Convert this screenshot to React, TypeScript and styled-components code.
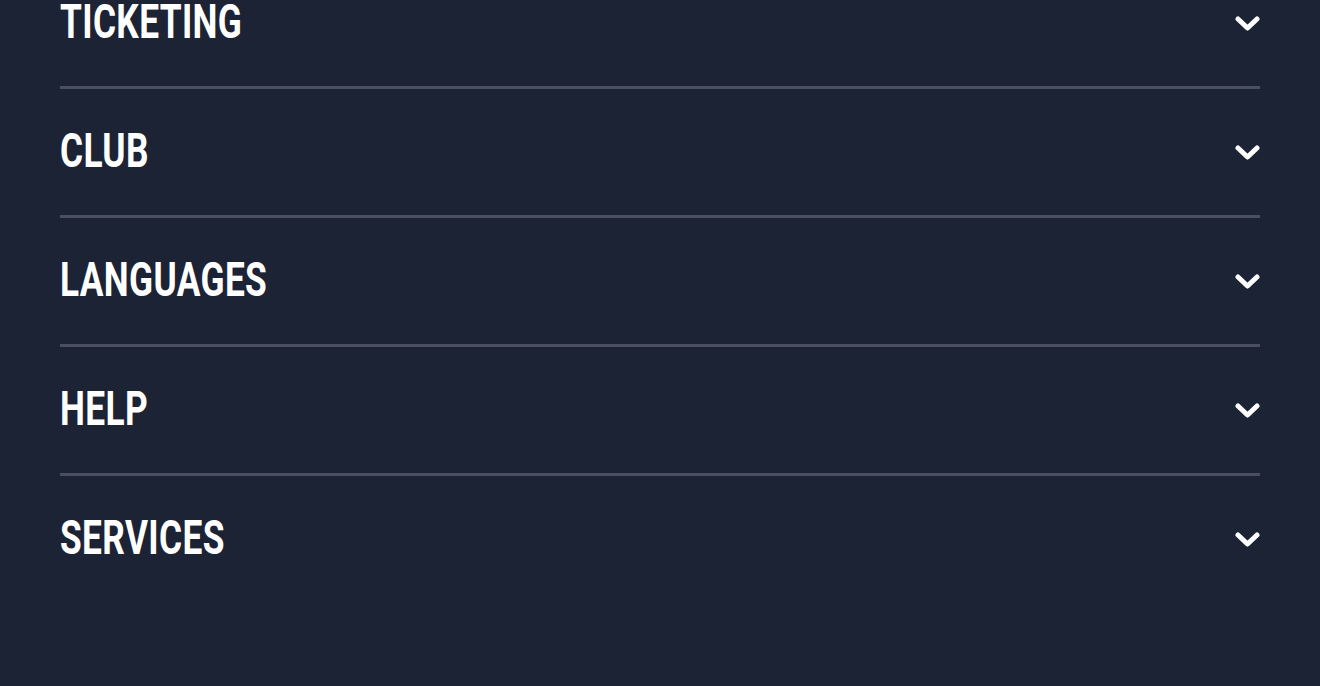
import React from "react";
import styled, { createGlobalStyle } from "styled-components";

const Global = createGlobalStyle`
  html, body { margin: 0; padding: 0; background: #1c2335; }
  body { overflow: hidden; }
`;

const Page = styled.div`
  width: 1320px;
  height: 686px;
  background: #1c2335;
  overflow: hidden;
  padding: 0 60px;
  box-sizing: border-box;
`;

const List = styled.ul`
  list-style: none;
  margin: -40px 0 0;
  padding: 0;
  display: flex;
  flex-direction: column;
`;

const Row = styled.li<{ $last?: boolean }>`
  height: 126px;
  display: flex;
  align-items: center;
  justify-content: space-between;
  border-bottom: ${(p) => (p.$last ? "none" : "3px solid #4a5062")};
`;

const Label = styled.span`
  display: inline-block;
  font-family: Roboto, "Liberation Sans", sans-serif;
  font-weight: 700;
  font-size: 49px;
  line-height: 1;
  letter-spacing: 0.5px;
  color: #ffffff;
  transform: scaleX(0.72);
  transform-origin: left center;
  margin-top: -3px;
`;

const Chevron = () => (
  <svg width="25" height="15" viewBox="0 0 25 15" fill="none">
    <polyline
      points="3,3 12.5,12 22,3"
      stroke="#ffffff"
      strokeWidth="5"
      strokeLinecap="round"
      strokeLinejoin="round"
    />
  </svg>
);

const items = ["TICKETING", "CLUB", "LANGUAGES", "HELP", "SERVICES"];

export default function App() {
  return (
    <>
      <Global />
      <Page>
        <List>
          {items.map((t, i) => (
            <Row key={t} $last={i === items.length - 1}>
              <Label>{t}</Label>
              <Chevron />
            </Row>
          ))}
        </List>
      </Page>
    </>
  );
}
